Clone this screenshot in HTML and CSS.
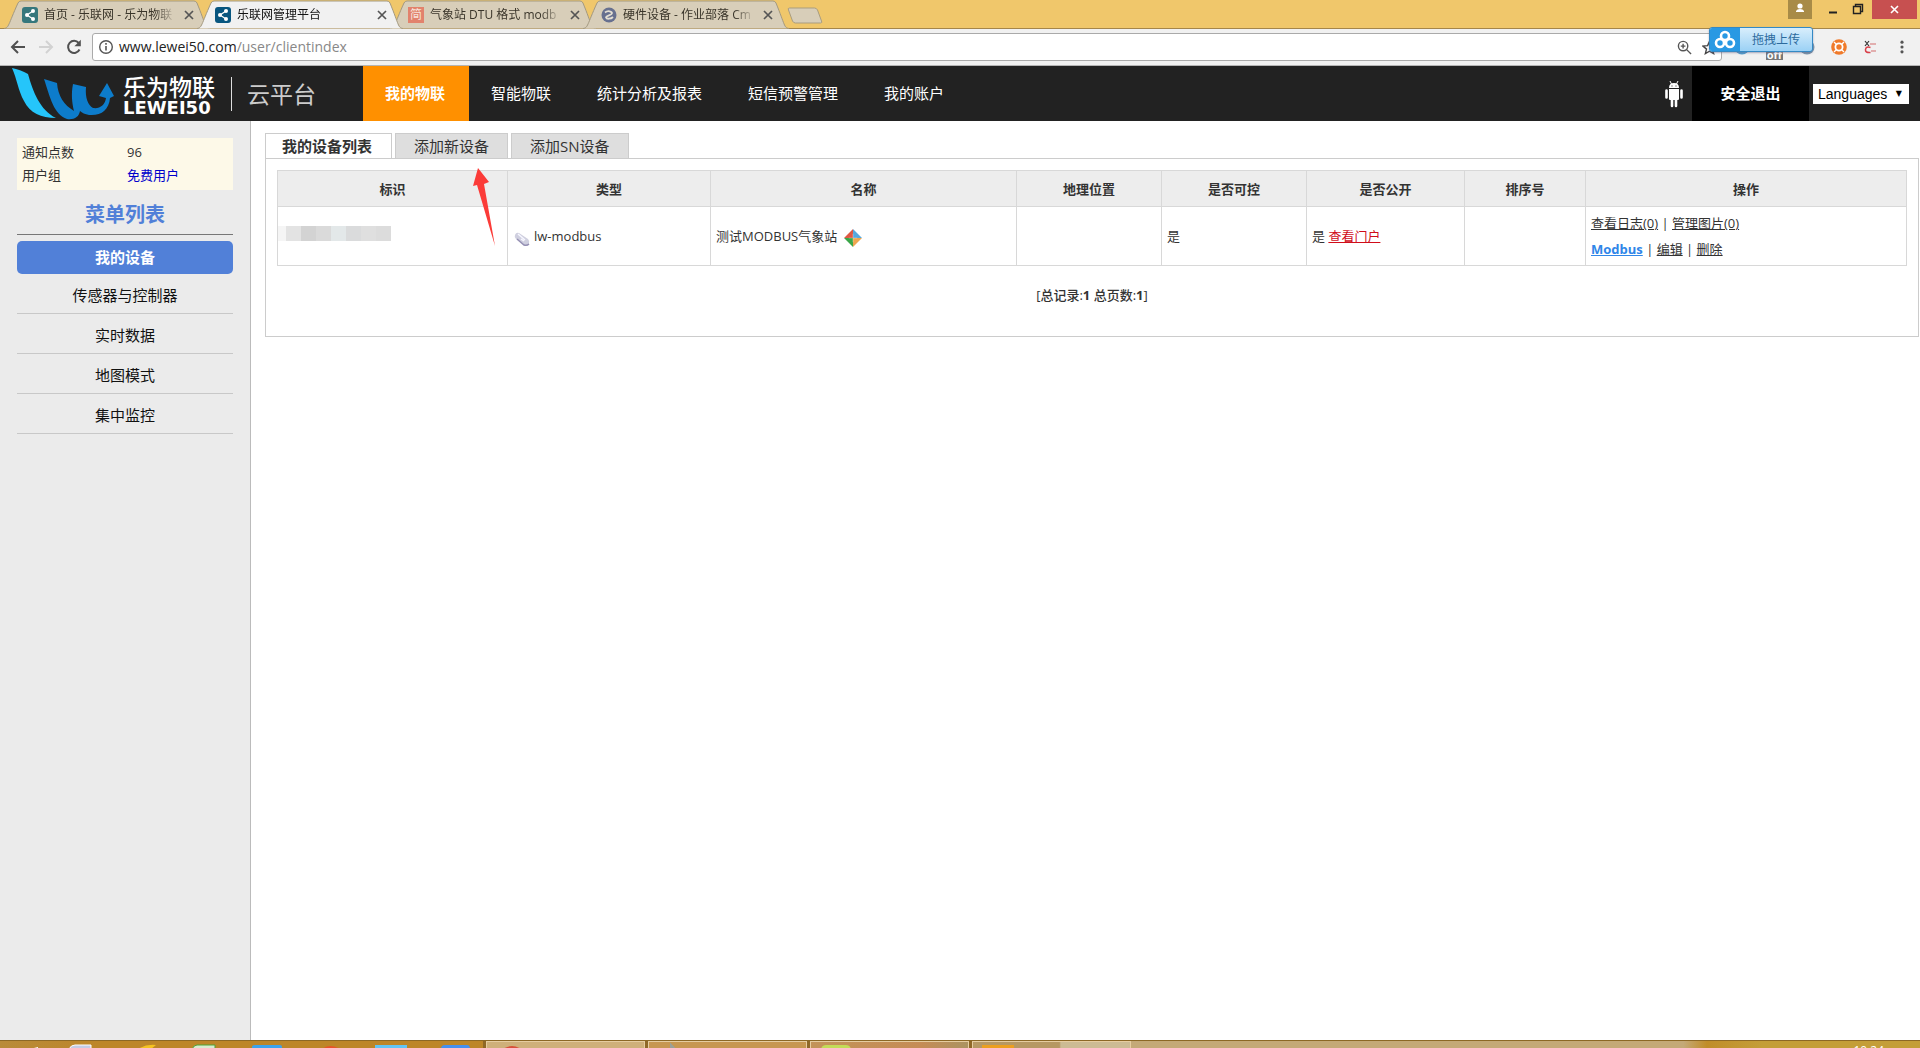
FILE: index.html
```html
<!DOCTYPE html>
<html lang="zh-CN">
<head>
<meta charset="utf-8">
<title>乐联网管理平台</title>
<link rel="stylesheet" href="styles.css">
</head>
<body>
<svg class="defs" aria-hidden="true">
  <defs>
    <symbol id="share" viewBox="0 0 16 16"><rect width="16" height="16" rx="3" fill="currentColor"/><path d="M11 4 5 8l6 4" fill="none" stroke="#fff" stroke-width="1.2"/><circle cx="11" cy="4" r="2" fill="#fff"/><circle cx="5" cy="8" r="2" fill="#fff"/><circle cx="11" cy="12" r="2" fill="#fff"/></symbol>
    <symbol id="x" viewBox="0 0 10 10"><path d="m1 1 8 8M9 1 1 9" stroke="#555" stroke-width="1.7"/></symbol>
    <symbol id="tabshape" viewBox="0 0 206 29"><path d="M0 28.500C5 28 4 25 14 3q1-2 3-2h173q2 0 3 2c9 22 8 25 13 25.500" fill="currentColor" stroke="#a39980"/></symbol>
  </defs>
</svg>

<header class="browser">
  <div class="strip">
    <div class="tabs">
      <div class="tab"><svg class="shape"><use href="#tabshape"/></svg><svg class="fav teal"><use href="#share"/></svg><span class="name">首页 - 乐联网 - 乐为物联</span><button class="close" aria-label="关闭"><svg><use href="#x"/></svg></button></div>
      <div class="tab current"><svg class="shape"><use href="#tabshape"/></svg><svg class="fav navy"><use href="#share"/></svg><span class="name">乐联网管理平台</span><button class="close" aria-label="关闭"><svg><use href="#x"/></svg></button></div>
      <div class="tab"><svg class="shape"><use href="#tabshape"/></svg><span class="fav jian">简</span><span class="name">气象站 DTU 格式 modb</span><button class="close" aria-label="关闭"><svg><use href="#x"/></svg></button></div>
      <div class="tab"><svg class="shape"><use href="#tabshape"/></svg><svg class="fav" viewBox="0 0 16 16"><circle cx="8" cy="8" r="7.500" fill="#67708f"/><path d="M4 5.500C7 3 11 4.500 11 6.200 11 8 5.500 8.500 5 10.200 5.500 12.500 10 12 12 10" fill="none" stroke="#e4dfd3" stroke-width="1.800"/></svg><span class="name">硬件设备 - 作业部落 Cm</span><button class="close" aria-label="关闭"><svg><use href="#x"/></svg></button></div>
    </div>
    <button class="newtab" aria-label="新标签页"><svg viewBox="0 0 36 18"><path d="M1.500 3q-1-2 1-2h25q2 0 3 2l4 11q1 2-1 2h-25q-2 0-3-2z" fill="#d8ceb9" stroke="#a99d80"/></svg></button>
    <div class="wincontrols">
      <button class="profile" aria-label="用户"><svg viewBox="0 0 24 19"><circle cx="12" cy="6" r="2.600" fill="#fff"/><path d="M8 12V11q1-2 4-2t4 2v1z" fill="#fff"/></svg></button>
      <button class="min" aria-label="最小化"><svg viewBox="0 0 26 19"><path d="M9 12.500h8" stroke="#222" stroke-width="2"/></svg></button>
      <button class="restore" aria-label="还原"><svg viewBox="0 0 26 19"><path d="M7.500 6.500h7v7h-7zM9.500 6.500V4.500h7v7H15" fill="none" stroke="#222" stroke-width="1.400"/></svg></button>
      <button class="quit" aria-label="关闭窗口"><svg viewBox="0 0 45 19"><path d="m19 6 7 7M26 6l-7 7" stroke="#fff" stroke-width="1.600"/></svg></button>
    </div>
  </div>
  <div class="toolbar">
    <button class="tool" aria-label="后退"><svg viewBox="0 0 16 16"><path d="M15 8H2M8 2 2 8l6 6" fill="none" stroke="#505050" stroke-width="2"/></svg></button>
    <button class="tool" aria-label="前进"><svg viewBox="0 0 16 16"><path d="M1 8h13M8 2l6 6-6 6" fill="none" stroke="#d2d2d2" stroke-width="2"/></svg></button>
    <button class="tool" aria-label="刷新"><svg viewBox="0 0 16 16"><path d="M13.500 10.500a6 6 0 1 1-.8-6.500" fill="none" stroke="#505050" stroke-width="2"/><path d="M14.800.800v6.400H8.400z" fill="#505050"/></svg></button>
    <form class="address">
      <svg class="info" viewBox="0 0 16 16"><circle cx="8" cy="8" r="6.300" fill="none" stroke="#555" stroke-width="1.400"/><path d="M8 7v4.500M8 4v1.700" stroke="#555" stroke-width="1.600"/></svg>
      <a class="url" href="#">www.lewei50.com<span>/user/clientindex</span></a>
      <svg class="loupe" viewBox="0 0 16 16"><circle cx="6.500" cy="6.500" r="5" fill="none" stroke="#555" stroke-width="1.500"/><path d="m10 10 5 5M4 6.500h5M6.500 4v5" stroke="#555" stroke-width="1.500"/></svg>
      <svg class="star" viewBox="0 0 16 16"><path d="m8 1.500 2 4.500 5 .5-3.800 3.200 1.200 4.800L8 12l-4.400 2.500 1.200-4.800L1 6.500 6 6z" fill="none" stroke="#444" stroke-width="1.500"/></svg>
    </form>
    <div class="extensions">
      <svg viewBox="0 0 16 16"><circle cx="8" cy="8" r="7.500" fill="#4f9fd0"/></svg>
      <span class="off">off</span>
      <svg viewBox="0 0 16 16"><circle cx="8" cy="8" r="7.500" fill="#7b96ab"/></svg>
      <svg viewBox="0 0 16 16"><circle cx="8" cy="8" r="7.800" fill="#f07a2a"/><circle cx="8" cy="8" r="3.600" fill="none" stroke="#fff" stroke-width="1.800"/><path d="m3 3 2.500 2.500m5 5L13 13m0-10-2.500 2.500m-5 5L3 13" stroke="#fff" stroke-width="1.400"/></svg>
      <svg viewBox="0 0 16 16"><path d="m2 2 4 5M6 2 2 7" stroke="#333" stroke-width="1.200"/><path d="M7 5h6M8 12h5" stroke="#d99" stroke-width="1.500"/><path d="M7.500 8.500Q3 7 2.500 10.500t5 3" fill="none" stroke="#d8404a" stroke-width="1.500"/></svg>
      <svg class="dots" viewBox="0 0 16 16"><circle cx="8" cy="2.500" r="1.800" fill="#555"/><circle cx="8" cy="8" r="1.800" fill="#555"/><circle cx="8" cy="13.500" r="1.800" fill="#555"/></svg>
    </div>
  </div>
  <button class="uploader"><svg viewBox="0 0 30 24"><g fill="none" stroke="#fff" stroke-width="2.600"><circle cx="15" cy="8" r="4"/><circle cx="10" cy="15" r="4"/><circle cx="20" cy="15" r="4"/></g></svg><span>拖拽上传</span></button>
</header>

<div class="site">
  <a class="brand" href="#">
    <svg class="mark" viewBox="0 0 104 54">
      <path d="M1 1C6 2 12 4 17 7c5 18 12 36 28 44C30 51 19 46 13 34 7 23 6 12 1 1z" fill="#25c5fa"/>
      <path d="M33 12 46 16C47 29 53 38 63 44C61 36 60 27 62 17L75 20C74 31 77 38 82 41C89 42 94 38 95 31L88 29 96 16 103 29 99 31C98 43 90 49 78 48C74 47 71 46 69 44C68 50 63 53 56 52C43 48 39 30 33 12z" fill="#0d7ccb"/>
    </svg>
    <span class="brandname"><span class="cn">乐为物联</span><span class="en">LEWEI50</span></span>
    <span class="cloud">云平台</span>
  </a>
  <nav class="mainnav">
    <a class="on" href="#">我的物联</a><a href="#">智能物联</a><a href="#">统计分析及报表</a><a href="#">短信预警管理</a><a href="#">我的账户</a>
  </nav>
  <svg class="android" viewBox="0 0 18 28"><path d="M4 8q0-5 5-5t5 5zM4 9h10v10q0 1-1 1H5q-1 0-1-1z" fill="#fff"/><path d="m5 1 1.500 3M13 1l-1.500 3" stroke="#fff"/><path d="M1.500 10.500v7m15-7v7M7 19v7m4-7v7" stroke="#fff" stroke-width="2.600" stroke-linecap="round"/><path d="M6.500 6h1m3 0h1" stroke="#222"/></svg>
  <a class="logout" href="#">安全退出</a>
  <span class="language"><select aria-label="Languages"><option>Languages</option></select><span aria-hidden="true">▼</span></span>
</div>

<div class="page">
  <aside class="side">
    <dl class="account"><dt>通知点数</dt><dd>96</dd><dt>用户组</dt><dd><a href="#">免费用户</a></dd></dl>
    <h2>菜单列表</h2>
    <a class="on" href="#">我的设备</a>
    <a href="#">传感器与控制器</a>
    <a href="#">实时数据</a>
    <a href="#">地图模式</a>
    <a href="#">集中监控</a>
  </aside>
  <main class="content">
    <div class="pagetabs"><a class="on" href="#">我的设备列表</a><a href="#">添加新设备</a><a href="#">添加SN设备</a></div>
    <section class="panel">
      <table>
        <colgroup><col class="c1"><col class="c2"><col class="c3"><col class="c4"><col class="c4"><col class="c5"><col class="c6"><col></colgroup>
        <thead><tr><th>标识</th><th>类型</th><th>名称</th><th>地理位置</th><th>是否可控</th><th>是否公开</th><th>排序号</th><th>操作</th></tr></thead>
        <tbody><tr>
          <td class="idcell"><div class="mosaic"><i></i><i></i><i></i><i></i><i></i><i></i><i></i><i></i></div></td>
          <td><svg class="device" viewBox="0 0 16 16"><path d="M1 4q1-3 4-2l9 6q2 2 1 5-2 3-5 1L2 8Q0 6 1 4z" fill="#cfcfdf"/><path d="m3 8 7 6q3 1 5-1" fill="none" stroke="#9590b4" stroke-width="1.500"/><path d="m4 3 7 6M7 8l3 2" stroke="#f7f7ff" stroke-width="1.500"/></svg>lw-modbus</td>
          <td>测试MODBUS气象站 <svg class="gem" viewBox="0 0 17 17"><path d="M8.500 0v8.500H0z" fill="#df5844"/><path d="M8.500 0 17 8.500H8.500z" fill="#56a8dd"/><path d="M0 8.500h8.500V17z" fill="#3aa648"/><path d="M8.500 8.500H17L8.500 17z" fill="#eea650"/><path d="M4.500 8.500h8m-4-4v8" stroke="#fff" stroke-opacity=".3"/></svg></td>
          <td></td><td>是</td><td>是 <a class="portal" href="#">查看门户</a></td><td></td>
          <td><a href="#">查看日志(0)</a> | <a href="#">管理图片(0)</a><br><a class="modbus" href="#">Modbus</a> | <a href="#">编辑</a> | <a href="#">删除</a></td>
        </tr></tbody>
      </table>
      <p class="total">[总记录:<b>1</b> 总页数:<b>1</b>]</p>
      <svg class="pointer" viewBox="0 0 24 80"><path d="M6 1 17 15 12 17 23 79 5 18 1 19z" fill="#fb3b38"/></svg>
    </section>
  </main>
</div>

<footer class="taskbar">
  <div class="launch">
    <svg viewBox="0 0 485 8"><path d="m30 8 8-2v2z" fill="#fff"/><path d="M69 8q2-4 6-4h16v4z" fill="#c4cbe6" stroke="#fff"/><path d="M138 8q8-5 18-4l-5 4z" fill="#f5c322"/><path d="M192 8q2-4 5-4h18v4z" fill="#d8ecd0" stroke="#4ea338"/><path d="M252 8V6q0-2 3-2h25q2 0 2 2v2z" fill="#3ca3ee"/><path d="M322 8q8-6 18 0z" fill="#e8542a"/><path d="M375 4h32v4h-32z" fill="#62c5f6"/><path d="M441 8q0-4 4-4h22q3 0 3 4z" fill="#4590f0"/></svg>
  </div>
  <button class="task pale" aria-label="Chrome"><svg viewBox="0 0 60 7"><path d="M16 7q9-6 18 0z" fill="#d8503a"/></svg></button>
  <button class="task" aria-label="窗口"><svg viewBox="0 0 60 7"><path d="M22 7V3l4 4" fill="none" stroke="#9aa19a" stroke-width="2"/></svg></button>
  <button class="task rose" aria-label="窗口"><svg viewBox="0 0 60 7"><path d="M10 7q1-4 5-4h20q4 0 5 4z" fill="#c3dc58"/></svg></button>
  <button class="task split" aria-label="窗口"><svg viewBox="0 0 60 7"><path d="M9 3h32v4H9z" fill="#ec9f20"/></svg></button>
  <div class="tray"><time>10:24</time></div>
</footer>
</body>
</html>
```
FILE: styles.css
```css
* { box-sizing: border-box; }
body {
  margin: 0;
  min-height: 100vh;
  display: flex;
  flex-direction: column;
  background: #fff;
  color: #333;
  font: 13px/26px "Open Sans", "Noto Sans CJK SC", sans-serif;
}
a { color: inherit; text-decoration: none; }
button { margin: 0; padding: 0; border: 0; background: none; font: inherit; }
svg { display: block; flex: none; }
.defs { position: absolute; width: 0; height: 0; }

/* browser window */
.browser { position: relative; background: #f1f1f1; border-bottom: 1px solid #b5b5b5; }
.strip { display: flex; height: 29px; background: #f0c76b; border-bottom: 1px solid #a5864a; }
.tabs { display: flex; padding-left: 4px; }
.tab {
  position: relative;
  display: flex;
  align-items: center;
  width: 206px;
  height: 29px;
  margin-right: -13px;
  padding: 0 16px 0 18px;
  color: #3a352a;
  font-size: 12px;
}
.tab .shape { position: absolute; left: 0; top: 0; width: 206px; height: 29px; color: #d8ceb9; }
.tab.current { z-index: 1; color: #111; }
.tab.current .shape { color: #f1f1f1; }
.fav { position: relative; width: 16px; height: 16px; margin-right: 6px; flex: none; }
.teal { color: #35777c; }
.navy { color: #08567f; }
.jian { background: #e2826c; color: #f7e5dc; line-height: 16px; text-align: center; }
.name { position: relative; flex: 1; white-space: nowrap; mask-image: linear-gradient(90deg, #000 84%, transparent); }
.close { position: relative; margin-left: 8px; }
.close svg { width: 10px; height: 10px; }
.newtab { margin-left: 11px; align-self: flex-start; padding-top: 7px; }
.newtab svg { width: 36px; height: 18px; }
.wincontrols { display: flex; align-items: flex-start; margin: 0 3px 0 auto; }
.wincontrols svg { height: 19px; }
.profile { background: #a88b47; }
.profile svg { width: 24px; }
.min { margin-left: 8px; }
.min svg, .restore svg { width: 26px; }
.quit { background: #c75050; }
.quit svg { width: 45px; }
.toolbar { display: flex; align-items: center; height: 36px; padding: 0 11px 0 10px; }
.tool { margin-right: 12px; }
.tool svg { width: 16px; height: 16px; }
.address {
  display: flex;
  align-items: center;
  flex: 1;
  height: 28px;
  margin: 0 12px 0 -2px;
  padding: 0 4px 0 5px;
  border: 1px solid #aaa;
  border-radius: 3px;
  background: #fff;
}
.info { width: 16px; height: 16px; }
.url { flex: 1; margin-left: 5px; color: #222; font-size: 14px; }
.url span { color: #888; }
.loupe { width: 15px; height: 15px; margin-right: 10px; }
.star { width: 15px; height: 15px; }
.extensions { display: flex; align-items: center; gap: 16px; }
.extensions svg { width: 16px; height: 16px; }
.extensions .dots { width: 14px; height: 14px; }
.off { align-self: flex-end; padding: 0 1px; margin-top: 15px; background: #777; color: #fff; font-size: 11px; line-height: 10px; font-weight: bold; }
.uploader {
  position: absolute;
  z-index: 2;
  right: 107px;
  top: 27px;
  display: flex;
  width: 104px;
  height: 25px;
  border: 1px solid #3489c4;
  border-radius: 3px;
  overflow: hidden;
  background: linear-gradient(#d8eefc, #9bd1f5);
  box-shadow: 0 1px 2px #6688;
  color: #2c6a9d;
  font-size: 12px;
  line-height: 24px;
}
.uploader svg { width: 30px; height: 24px; background: #2999e3; }
.uploader span { flex: 1; text-align: center; }

/* site header */
.site { display: flex; align-items: center; height: 55px; padding-right: 11px; background: #222; color: #fff; font-size: 15px; }
.brand { display: flex; align-items: center; width: 363px; padding-left: 11px; }
.mark { width: 104px; height: 54px; margin-right: 8px; }
.brandname { display: flex; flex-direction: column; padding-top: 4px; }
.cn { font-size: 23px; line-height: 24px; font-weight: 500; }
.en { font: bold 18px/18px "DejaVu Sans", sans-serif; }
.cloud { margin-left: 16px; padding-left: 15px; border-left: 1px solid #ddd; color: #ccc; font-size: 23px; line-height: 34px; }
.mainnav { display: flex; }
.mainnav a { padding: 0 24px 0 22px; line-height: 55px; }
.mainnav .on { background: #ff9000; font-weight: bold; }
.android { width: 18px; height: 28px; margin: 0 9px 0 auto; }
.logout { width: 117px; margin-right: 4px; background: #000; line-height: 55px; text-align: center; font-weight: bold; }
.language { display: flex; align-items: center; width: 96px; height: 20px; padding-right: 7px; background: #fff; color: #000; }
.language select { flex: 1; width: 80px; appearance: none; border: 0; padding: 0 0 0 5px; background: none; color: #000; font: 14px "Liberation Sans", sans-serif; }
.language span { font: 8px "DejaVu Sans", sans-serif; }

/* page body */
.page { flex: 1; display: flex; }
.side { width: 251px; padding: 17px 17px 0; border-right: 1px solid #bbb; background: #ebebeb; text-align: center; }
.account { display: grid; grid-template-columns: 105px 1fr; margin: 0; padding: 3px 5px; background: #fdf9e8; text-align: left; line-height: 23px; }
.account dd { margin: 0; }
.account a { color: #00c; }
.side h2 { margin: 7px 0 6px; padding-bottom: 1px; border-bottom: 1px solid #777; color: #5180d8; font-size: 20px; line-height: 36px; }
.side > a { display: block; height: 40px; padding-top: 4px; border-bottom: 1px solid #c8c8c8; color: #111; font-size: 15px; line-height: 34px; }
.side > a.on { height: 33px; padding: 0; border: 0; border-radius: 5px; background: #5180d8; color: #fff; line-height: 33px; font-weight: bold; }
.content { flex: 1; padding: 12px 1px 0 14px; }
.pagetabs { display: flex; gap: 3px; font-size: 15px; line-height: 24px; }
.pagetabs a { padding: 0 18px; border: 1px solid #ccc; border-bottom: 0; background: #dedede; }
.pagetabs .on { position: relative; padding: 0 19px 0 16px; margin-bottom: -1px; background: #fff; font-weight: bold; }
.panel { position: relative; height: 179px; padding: 11px; border: 1px solid #ccc; }
table { width: 100%; border-collapse: collapse; table-layout: fixed; }
.c1 { width: 230px; }
.c2 { width: 203px; }
.c3 { width: 306px; }
.c4 { width: 145px; }
.c5 { width: 158px; }
.c6 { width: 121px; }
th, td { border: 1px solid #d8d8d8; }
th { height: 36px; padding: 0; background: #ededed; font-weight: bold; }
td { height: 59px; padding: 3px 5px; text-align: left; }
td a { text-decoration: underline; }
.portal { color: #d00d1a; }
.modbus { color: #2f86e8; font-weight: bold; }
td.idcell { padding: 0; }
.mosaic { display: flex; height: 15px; margin-bottom: 6px; }
.mosaic i { width: 15px; background: #dcdcdc; }
.mosaic i:nth-child(1) { width: 8px; background: #f5f5f5; }
.mosaic i:nth-child(2) { background: #e3e3e3; }
.mosaic i:nth-child(3) { background: #d3d3d3; }
.mosaic i:nth-child(4) { background: #dadada; }
.mosaic i:nth-child(5) { background: #e3e8e9; }
.mosaic i:nth-child(6) { background: #dadbdc; }
.mosaic i:nth-child(7) { background: #dfdfdf; }
.device, .gem { display: inline-block; width: 16px; height: 16px; margin: 2px 4px 0 1px; vertical-align: middle; }
.gem { width: 18px; height: 18px; margin: 0 0 0 3px; }
.total { margin: 16px 0 0; text-align: center; font-weight: 500; }
.pointer { position: absolute; left: 206px; top: 8px; width: 24px; height: 80px; }

/* taskbar */
.taskbar { display: flex; gap: 3px; height: 8px; overflow: hidden; border-top: 1px solid #8c6826; background: #8f6827; }
.launch { width: 483px; background: linear-gradient(90deg, #b98b3a, #bd8629 20%); }
.launch svg { width: 485px; height: 8px; }
.task { width: 159px; border: 1px solid #e6cda0; border-bottom: 0; background: #c79751; }
.task svg { width: 60px; height: 7px; }
.pale { background: #cfb07a; }
.rose { background: linear-gradient(90deg, #c39359, #c58c56 70%, #ab9361); }
.split { background: linear-gradient(90deg, #b69863 55%, #ccbb94 56%); }
.tray { flex: 1; margin-left: -3px; padding-right: 36px; background: linear-gradient(90deg, #c4a977 70%, #c08d29 73%, #c49e38 80%); text-align: right; color: #fff; font-size: 12px; line-height: 20px; }
```
